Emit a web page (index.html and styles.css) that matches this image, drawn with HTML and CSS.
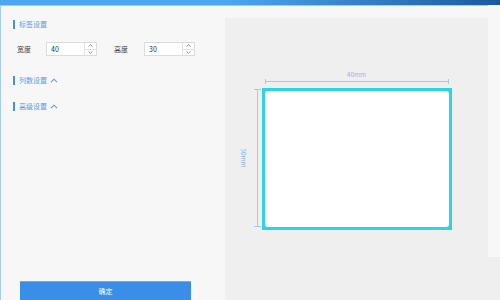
FILE: index.html
```html
<!DOCTYPE html>
<html lang="zh-CN">
<head>
    <meta charset="UTF-8">
    <meta name="viewport" content="width=device-width, initial-scale=1.0">
    <title>标签设置</title>
    <link rel="stylesheet" href="styles.css">
</head>
<body>
    <div class="topbar"></div>
    <div class="main">
        <div class="side">
            <div class="section-title">标签设置</div>
            <div class="size-row">
                <label class="field-label">宽度</label>
                <div class="number-input">
                    <span class="value">40</span>
                    <div class="spin">
                        <span class="spin-btn"><svg width="5" height="3" viewBox="0 0 5 3"><path d="M0.5 2.5 L2.5 0.7 L4.5 2.5" fill="none" stroke="#777" stroke-width="0.8"/></svg></span>
                        <span class="spin-btn"><svg width="5" height="3" viewBox="0 0 5 3"><path d="M0.5 0.5 L2.5 2.3 L4.5 0.5" fill="none" stroke="#777" stroke-width="0.8"/></svg></span>
                    </div>
                </div>
                <label class="field-label second">高度</label>
                <div class="number-input">
                    <span class="value">30</span>
                    <div class="spin">
                        <span class="spin-btn"><svg width="5" height="3" viewBox="0 0 5 3"><path d="M0.5 2.5 L2.5 0.7 L4.5 2.5" fill="none" stroke="#777" stroke-width="0.8"/></svg></span>
                        <span class="spin-btn"><svg width="5" height="3" viewBox="0 0 5 3"><path d="M0.5 0.5 L2.5 2.3 L4.5 0.5" fill="none" stroke="#777" stroke-width="0.8"/></svg></span>
                    </div>
                </div>
            </div>
            <div class="section-title toggle">列数设置
                <svg class="caret" width="8" height="5" viewBox="0 0 8 5"><path d="M1 4.2 L4 1.2 L7 4.2" fill="none" stroke="#5b9bea" stroke-width="1.1"/></svg>
            </div>
            <div class="section-title toggle second-toggle">高级设置
                <svg class="caret" width="8" height="5" viewBox="0 0 8 5"><path d="M1 4.2 L4 1.2 L7 4.2" fill="none" stroke="#5b9bea" stroke-width="1.1"/></svg>
            </div>
            <button class="btn">确定</button>
        </div>
        <div class="preview">
            <div class="label-wrap">
                <div class="dim-h">
                    <span class="dim-text">40mm</span>
                </div>
                <div class="dim-v">
                    <span class="dim-text-v">30mm</span>
                </div>
                <div class="label-box">
                    <div class="label-inner"></div>
                </div>
            </div>
        </div>
        <div class="track"></div>
    </div>
</body>
</html>
```

FILE: styles.css
```css
* {
    box-sizing: border-box;
}
html, body {
    margin: 0;
    padding: 0;
    width: 500px;
    height: 300px;
    overflow: hidden;
}
body {
    background-color: #f7f7f7;
    font-family: "Noto Sans CJK SC", "Noto Sans", sans-serif;
    font-size: 7px;
    color: #444;
}
.topbar {
    height: 6px;
    background: linear-gradient(90deg, #4ea7f3 44%, #1b5a9e 100%);
    border-bottom: 1px solid #a9cbee;
}
.main {
    position: relative;
    display: flex;
    height: 294px;
    border-left: 1px solid #a3cdf5;
}
.side {
    width: 224px;
    display: flex;
    flex-direction: column;
    padding-left: 12px;
}
.section-title {
    display: flex;
    align-items: center;
    height: 9px;
    margin-top: 14px;
    padding-left: 4px;
    border-left: 2px solid #4a90e2;
    color: #5b9bea;
    line-height: 9px;
}
.caret {
    margin-left: 3px;
}
.toggle {
    margin-top: 20px;
}
.second-toggle {
    margin-top: 17px;
}
.size-row {
    display: flex;
    align-items: center;
    margin-top: 13px;
    padding-left: 4px;
}
.field-label {
    width: 29px;
    color: #444;
}
.field-label.second {
    width: 30px;
    margin-left: 17px;
}
.number-input {
    display: flex;
    width: 51px;
    height: 14px;
    background: white;
    border: 1px solid #dcdcdc;
}
.value {
    flex: 1;
    padding-left: 4px;
    line-height: 12px;
    color: #333;
}
.spin {
    width: 12px;
    display: flex;
    flex-direction: column;
    border-left: 1px solid #e2e2e2;
}
.spin-btn {
    flex: 1;
    display: flex;
    align-items: center;
    justify-content: center;
}
.spin-btn + .spin-btn {
    border-top: 1px solid #e2e2e2;
}
.btn {
    margin-top: auto;
    margin-left: 7px;
    width: 171px;
    height: 19px;
    padding: 0;
    border: none;
    border-top: 1px solid #6aaef0;
    background-color: #3a8ee8;
    color: white;
    font-family: inherit;
    font-size: 7px;
}
.preview {
    flex: 1;
    margin-top: 12px;
    padding-right: 12px;
    display: flex;
    align-items: center;
    justify-content: center;
    background-color: #efefef;
}
.label-wrap {
    position: relative;
}
.label-box {
    width: 190px;
    height: 142px;
    padding: 3px;
    background-color: #2fd3e8;
}
.label-inner {
    height: 100%;
    background: white;
    border-radius: 3px;
}
.dim-h {
    position: absolute;
    left: 3px;
    right: 3px;
    top: -7px;
    height: 1px;
    background: #a9c6ef;
}
.dim-h::before, .dim-h::after {
    content: "";
    position: absolute;
    top: -2px;
    width: 1px;
    height: 5px;
    background: #a9c6ef;
}
.dim-h::before { left: 0; }
.dim-h::after { right: 0; }
.dim-text {
    position: absolute;
    left: 0;
    right: 0;
    top: -11px;
    text-align: center;
    color: #8fb4ee;
    font-size: 6.5px;
    line-height: 8px;
}
.dim-v {
    position: absolute;
    left: -5px;
    top: 1px;
    bottom: 3px;
    width: 1px;
    background: #a9c6ef;
}
.dim-v::before, .dim-v::after {
    content: "";
    position: absolute;
    left: -3px;
    width: 7px;
    height: 1px;
    background: #a9c6ef;
}
.dim-v::before { top: 0; }
.dim-v::after { bottom: 0; }
.dim-text-v {
    position: absolute;
    top: 50%;
    left: -13px;
    transform: translate(-50%, -50%) rotate(90deg);
    color: #8fb4ee;
    font-size: 6.5px;
    line-height: 8px;
    white-space: nowrap;
}
.track {
    position: absolute;
    right: 0;
    top: -1px;
    width: 12px;
    height: 252px;
    background-color: #f7f7f7;
}
```
